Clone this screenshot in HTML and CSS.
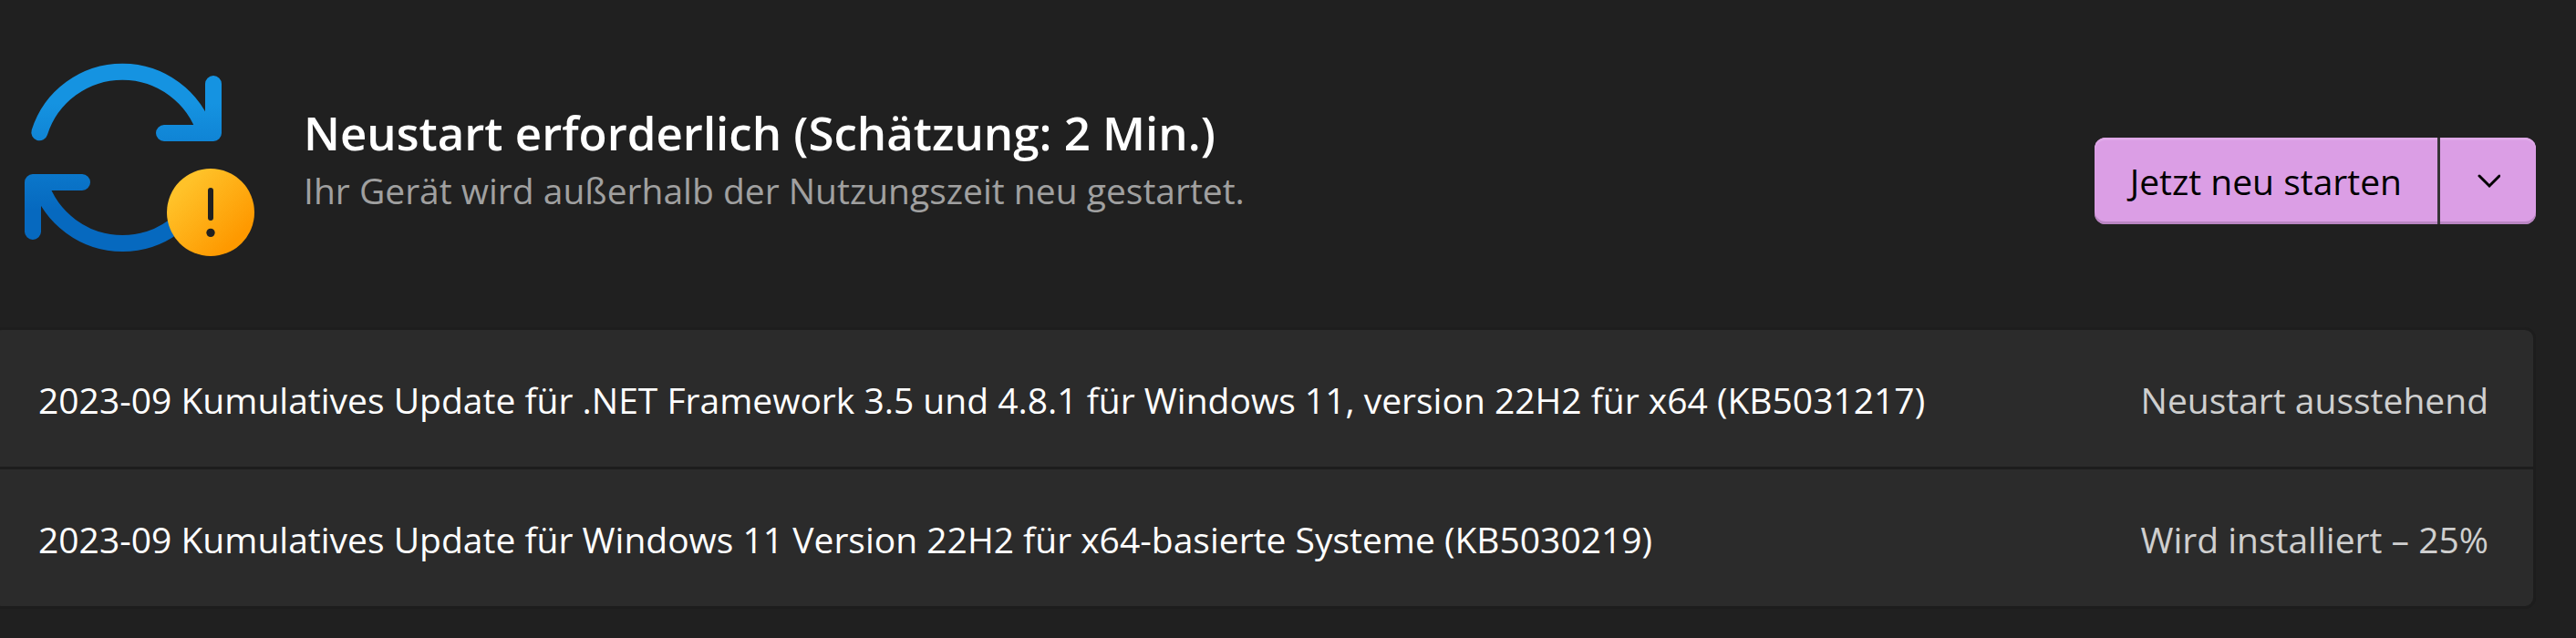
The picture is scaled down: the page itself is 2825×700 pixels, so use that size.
FILE: index.html
```html
<!DOCTYPE html>
<html lang="de">

<head>
	<meta charset="utf-8">
	<title>Windows Update</title>
	<link rel="stylesheet" href="styles.css">
</head>

<body>
	<header class="status">
		<svg class="status-icon" viewBox="81 84 756 639" aria-hidden="true">
			<defs>
				<linearGradient id="blue" gradientUnits="userSpaceOnUse" x1="0" y1="220" x2="0" y2="570">
					<stop offset="0" stop-color="#1593e1"/>
					<stop offset="1" stop-color="#0669bf"/>
				</linearGradient>
				<linearGradient id="orange" x1="0.2" y1="0.2" x2="0.8" y2="0.8">
					<stop offset="0" stop-color="#ffc229"/>
					<stop offset="1" stop-color="#fe9900"/>
				</linearGradient>
			</defs>
			<g fill="none" stroke="url(#blue)" stroke-width="54" stroke-linecap="round" stroke-linejoin="round">
				<path d="M130 316A286 286 0 0 1 676 318"/>
				<path d="M702 156V318H540"/>
				<path d="M130 480A286 286 0 0 0 676 480"/>
				<path d="M108 642V480H270"/>
			</g>
			<circle cx="693" cy="579" r="144" fill="url(#orange)"/>
			<path d="M693 507V597" stroke="#202020" stroke-width="18" stroke-linecap="round"/>
			<circle cx="693" cy="646" r="14" fill="#202020"/>
		</svg>
		<div class="status-text">
			<h1>Neustart erforderlich (Schätzung: 2 Min.)</h1>
			<p>Ihr Gerät wird außerhalb der Nutzungszeit neu gestartet.</p>
		</div>
		<div class="split-button">
			<button class="restart" type="button">Jetzt neu starten</button>
			<button class="more" type="button" aria-label="Weitere Optionen">
				<svg class="chevron" viewBox="0 0 26 16" aria-hidden="true">
					<path d="M3 2L14 13L25 2" fill="none" stroke="#000" stroke-width="3" stroke-linecap="round"/>
				</svg>
			</button>
		</div>
	</header>
	<ul class="updates">
		<li>
			<span class="name">2023-09 Kumulatives Update für .NET Framework 3.5 und 4.8.1 für Windows 11, version 22H2 für x64 (KB5031217)</span>
			<span class="state">Neustart ausstehend</span>
		</li>
		<li>
			<span class="name">2023-09 Kumulatives Update für Windows 11 Version 22H2 für x64-basierte Systeme (KB5030219)</span>
			<span class="state">Wird installiert – 25%</span>
		</li>
	</ul>
</body>

</html>
```
FILE: styles.css
```css
body {
	margin: 0px;
	padding-top: 68px;
	background-color: #202020;
	color: white;
	font-family: 'Segoe UI', 'Open Sans', 'Noto Sans', sans-serif;
	font-size: 39px;
	line-height: 56px;
}

.status {
	display: flex;
	align-items: flex-start;
	padding: 0px 44px 0px 27px;
}

.status-icon {
	flex: none;
	width: 252px;
	height: 213px;
}

.status-text {
	flex: 1;
	margin-left: 54px;
	padding-top: 41px;
}

h1 {
	margin: 0px;
	font-size: 51px;
	font-weight: 600;
	line-height: 72px;
}

p {
	margin: 0px;
	color: #a0a0a0;
}

.split-button {
	display: flex;
	margin-top: 83px;
}

button {
	display: flex;
	align-items: center;
	justify-content: center;
	height: 95px;
	padding: 0px 39px;
	border: 0px;
	background-color: #db9ee5;
	box-shadow: inset 0px 3px #dfa8e8, inset 0px -3px #ba86c3;
	color: black;
	font: inherit;
}

.restart {
	border-radius: 12px 0px 0px 12px;
}

.more {
	width: 108px;
	border-left: 3px solid #363337;
	border-radius: 0px 12px 12px 0px;
}

.chevron {
	flex: none;
	width: 26px;
	height: 16px;
}

.updates {
	margin: 78px 44px 0px -10px;
	padding: 0px;
	border: 3px solid #1d1d1d;
	border-radius: 12px;
	background-color: #2b2b2b;
	list-style: none;
}

.updates li {
	display: flex;
	justify-content: space-between;
	padding: 49px 49px 45px;
}

.updates li + li {
	border-top: 3px solid #1d1d1d;
}

.state {
	color: #cfcfcf;
}
```
